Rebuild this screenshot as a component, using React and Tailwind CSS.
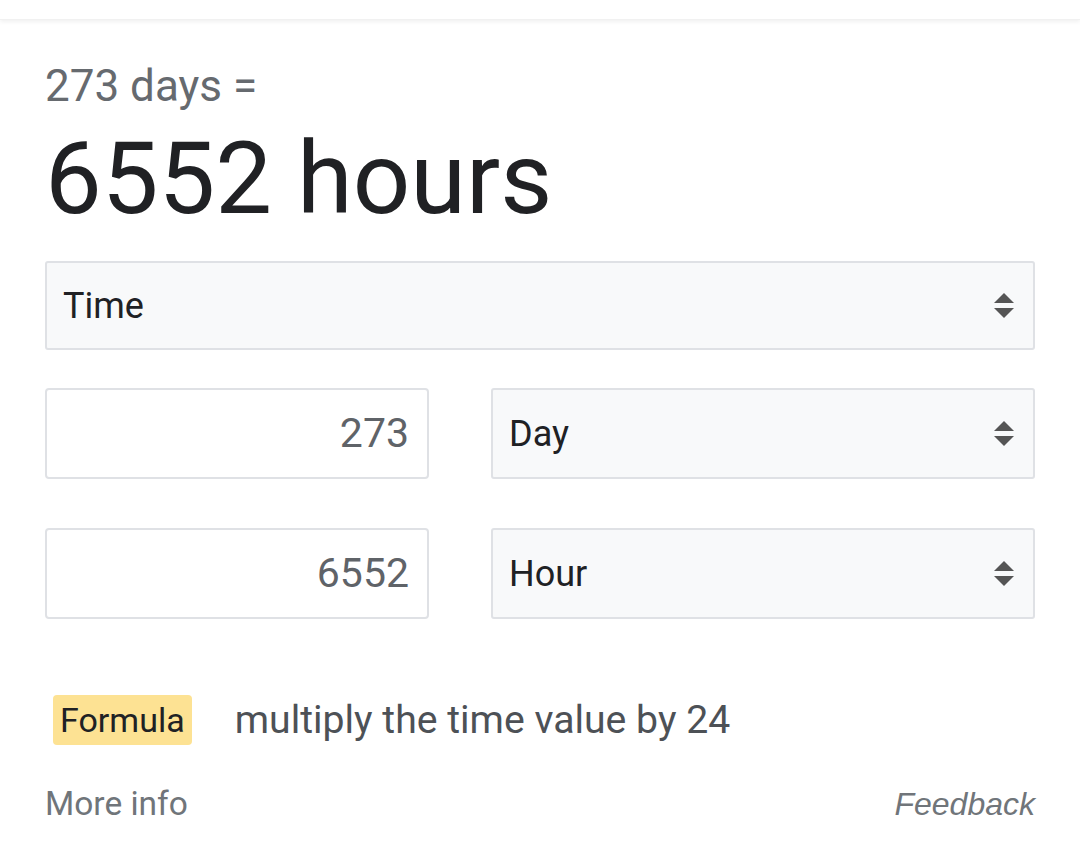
import React from "react";

function Arrows() {
  return (
    <svg width="22" height="30" viewBox="0 0 22 30" className="shrink-0">
      <polygon points="11,2 21,12 1,12" fill="#555" />
      <polygon points="1,17 21,17 11,27" fill="#555" />
    </svg>
  );
}

function Select({ label, className }) {
  return (
    <div className={"flex items-center justify-between bg-[#f8f9fa] border-2 border-[#dfe1e5] rounded-[3px] pl-[16px] pr-[18px] " + className}>
      <span className="text-[#202124] text-[36px]">{label}</span>
      <Arrows />
    </div>
  );
}

function Input({ value }) {
  return (
    <div className="w-[384px] h-[91px] flex items-center justify-end border-2 border-[#dfe1e5] rounded-[4px] pr-[18px] bg-white">
      <span className="text-[#5f6368] text-[41px]">{value}</span>
    </div>
  );
}

export default function App() {
  return (
    <div className="w-[1080px] h-[852px] bg-white relative overflow-hidden" style={{ fontFamily: "Roboto, 'Noto Sans', sans-serif" }}>
      <div className="h-[20px] bg-white shadow-[0_2px_4px_rgba(0,0,0,0.06)] border-b border-[#f1f1f1]" />
      <div className="px-[45px]">
        <div className="pt-[42px] text-[#666a6f] text-[44px] leading-[48px]">273 days =</div>
        <div className="text-[#202124] text-[101px] leading-[110px] mt-[14px]">6552 hours</div>
        <Select label="Time" className="mt-[27px] h-[89px] w-[990px]" />
        <div className="flex gap-[62px] mt-[38px]">
          <Input value="273" />
          <Select label="Day" className="h-[91px] w-[544px]" />
        </div>
        <div className="flex gap-[62px] mt-[49px]">
          <Input value="6552" />
          <Select label="Hour" className="h-[91px] w-[544px]" />
        </div>
        <div className="flex items-center mt-[72px] ml-[8px]">
          <span className="bg-[#fde293] text-[#202124] text-[34px] leading-[50px] px-[7px] rounded-[4px]">Formula</span>
          <span className="ml-[43px] text-[#4d5156] text-[39.2px]">multiply the time value by 24</span>
        </div>
        <div className="flex justify-between items-center mt-[29px] w-[990px]">
          <span className="text-[#70757a] text-[33.5px]">More info</span>
          <span className="text-[#70757a] text-[32px] italic" style={{ fontFamily: "'Liberation Sans', Arial, sans-serif" }}>Feedback</span>
        </div>
      </div>
    </div>
  );
}
